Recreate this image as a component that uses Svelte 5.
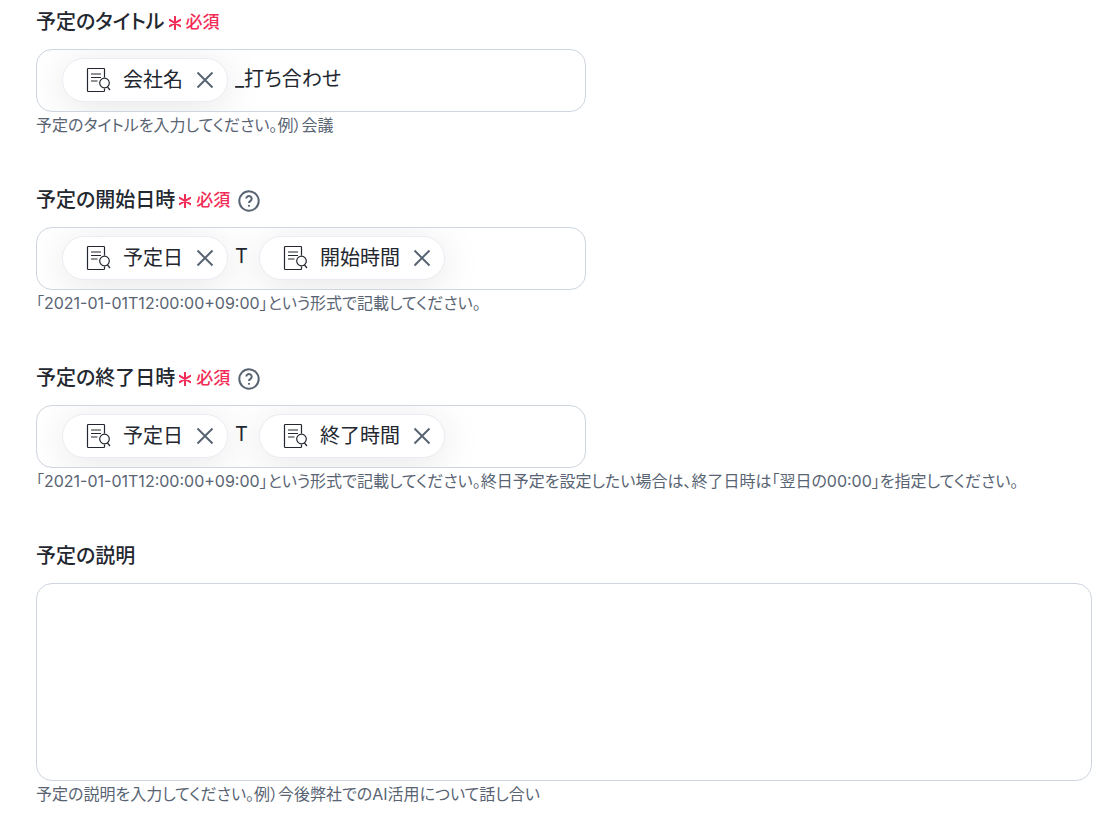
<script>
    let fields = $state([
        {
            id: 'title',
            label: '予定のタイトル',
            required: true,
            help: false,
            hint: '予定のタイトルを入力してください。例）会議',
            parts: [
                { type: 'chip', text: '会社名' },
                { type: 'text', text: '_打ち合わせ', grow: true }
            ]
        },
        {
            id: 'start',
            label: '予定の開始日時',
            required: true,
            help: true,
            hint: '「2021-01-01T12:00:00+09:00」という形式で記載してください。',
            parts: [
                { type: 'chip', text: '予定日' },
                { type: 'text', text: 'T' },
                { type: 'chip', text: '開始時間' },
                { type: 'text', text: '', grow: true }
            ]
        },
        {
            id: 'end',
            label: '予定の終了日時',
            required: true,
            help: true,
            hint: '「2021-01-01T12:00:00+09:00」という形式で記載してください。終日予定を設定したい場合は、終了日時は「翌日の00:00」を指定してください。',
            parts: [
                { type: 'chip', text: '予定日' },
                { type: 'text', text: 'T' },
                { type: 'chip', text: '終了時間' },
                { type: 'text', text: '', grow: true }
            ]
        }
    ]);
    let description = $state('');

    function removePart(field, part) {
        field.parts = field.parts.filter((p) => p !== part);
    }
</script>

<form>
    {#each fields as field (field.id)}
        <div class="field">
            <div class="label-row">
                <label for="{field.id}-input">{field.label}</label>
                {#if field.required}
                    <span class="required">
                        <svg width="12" height="14" viewBox="0 0 12 14" aria-hidden="true">
                            <path d="M6 .8v12.400M.6 3.900l10.800 6.200M11.400 3.900L.6 10.100" />
                        </svg>
                        必須
                    </span>
                {/if}
                {#if field.help}
                    <button type="button" class="help" aria-label="ヘルプ">
                        <svg width="22" height="22" viewBox="0 0 22 22" aria-hidden="true">
                            <circle cx="11" cy="11" r="9.7" />
                            <path d="M8.300 8.600a2.700 2.700 0 1 1 4.200 2.300c-.9.6-1.500 1-1.500 2" />
                            <circle class="dot" cx="11" cy="15.800" r="1.1" />
                        </svg>
                    </button>
                {/if}
            </div>
            <div class="box">
                {#each field.parts as part}
                    {#if part.type === 'chip'}
                        <span class="chip">
                            <svg class="doc" width="25" height="26" viewBox="0 0 25 26" aria-hidden="true">
                                <path d="M18.5 10.500V2.3a.8.8 0 0 0-.8-.8H2.3a.8.8 0 0 0-.8.8v21.4a.8.8 0 0 0 .8.8h15.400a.8.8 0 0 0 .8-.8V21.500" />
                                <path d="M5 7h10M5 10.500h10M5 14h6.500" />
                                <circle cx="18.500" cy="16" r="4.800" />
                                <path d="M21.500 20l2.500 3" />
                            </svg>
                            <span class="name">{part.text}</span>
                            <button type="button" class="remove" aria-label="{part.text}を削除" onclick={() => removePart(field, part)}>
                                <svg width="18" height="18" viewBox="0 0 18 18" aria-hidden="true">
                                    <path d="M1.500 1.500l15 15M16.500 1.500l-15 15" />
                                </svg>
                            </button>
                        </span>
                    {:else}
                        <input
                            type="text"
                            class:grow={part.grow}
                            id={part.grow ? `${field.id}-input` : undefined}
                            aria-label={field.label}
                            bind:value={part.text}
                        />
                    {/if}
                {/each}
            </div>
            <p class="hint">{field.hint}</p>
        </div>
    {/each}

    <div class="field">
        <div class="label-row">
            <label for="description">予定の説明</label>
        </div>
        <textarea id="description" bind:value={description}></textarea>
        <p class="hint">予定の説明を入力してください。例）今後弊社でのAI活用について話し合い</p>
    </div>
</form>

<style>
    :global(body) { margin: 0; background: #fff; }

    form {
        display: flex;
        flex-direction: column;
        gap: 46px;
        padding: 6px 27px 16px 36px;
        font-family: Inter, "Noto Sans CJK JP", sans-serif;
        font-feature-settings: "palt";
        font-size: 20px;
        color: #23272f;
    }
    input, textarea, button { font: inherit; font-feature-settings: inherit; color: inherit; }
    button { display: flex; padding: 0; border: none; background: none; cursor: pointer; }
    svg { display: block; fill: none; stroke: currentColor; }

    .label-row { display: flex; align-items: center; height: 28px; margin-bottom: 15px; }
    label { font-weight: 500; }
    .required { display: flex; align-items: center; gap: 5px; margin-left: 4px; font-size: 17px; font-weight: 500; color: #f22b57; }
    .required svg { margin-top: 6px; stroke-width: 2; stroke-linecap: round; }
    .help { margin: 6px 0 0 8px; color: #596473; }
    .help svg { stroke-width: 2; }
    .help .dot { fill: currentColor; stroke: none; }

    .box {
        display: flex;
        align-items: center;
        box-sizing: border-box;
        max-width: 550px;
        padding: 8px 25px 9px;
        border: 1px solid #ced5de;
        border-radius: 16px;
        overflow: hidden;
    }
    .chip {
        display: flex;
        align-items: center;
        flex-shrink: 0;
        box-sizing: border-box;
        height: 44px;
        padding: 0 13px 0 23px;
        border: 1px solid #e9ecf2;
        border-radius: 22px;
        background: #fff;
        box-shadow: 0 6px 40px rgba(0, 0, 0, 0.1);
    }
    .doc { margin-right: 12px; stroke-width: 1.2; }
    .name { padding-bottom: 3px; }
    .remove { margin-left: 13px; color: #596473; }
    .remove svg { stroke-width: 2; }
    input {
        box-sizing: border-box;
        width: 16px;
        height: 40px;
        margin: 0 8px 0 7px;
        padding: 0 0 5px;
        border: none;
        outline: none;
        background: none;
    }
    .grow { flex: 1; min-width: 0; }

    textarea {
        display: block;
        box-sizing: border-box;
        width: 100%;
        height: 198px;
        padding: 16px 24px;
        border: 1px solid #ced5de;
        border-radius: 16px;
        outline: none;
        resize: none;
    }
    .hint { margin: 0; font-size: 16px; line-height: 26px; color: #596473; }
</style>
